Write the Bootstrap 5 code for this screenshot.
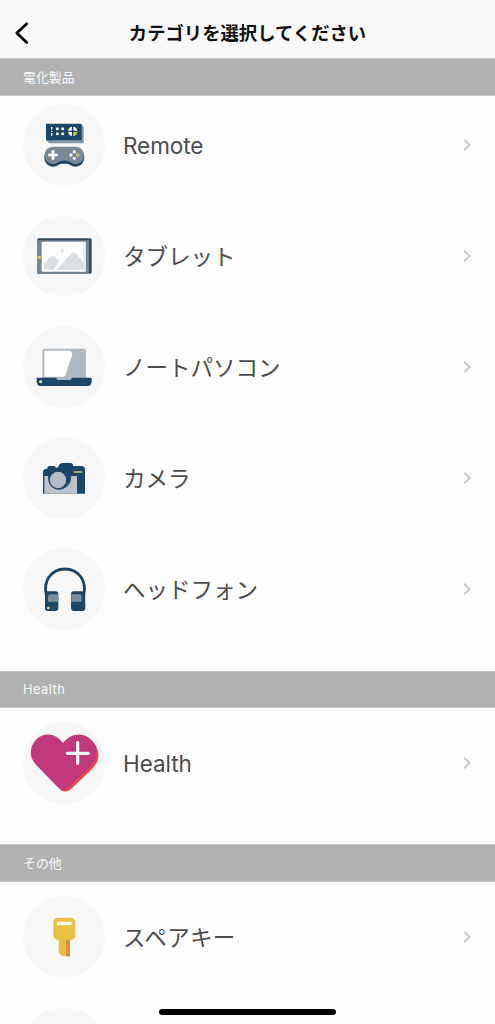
<!DOCTYPE html>
<html lang="ja">
<head>
<meta charset="utf-8">
<meta name="viewport" content="width=device-width, initial-scale=1">
<title>カテゴリを選択してください</title>
<link href="https://cdn.jsdelivr.net/npm/bootstrap@5.3.0/dist/css/bootstrap.min.css" rel="stylesheet">
<style>
  body { font-family: Inter, "Noto Sans CJK JP", sans-serif; background: #fefefe; }
  .screen { height: 1024px; }
  .topbar { height: 58px; background: #f9f9f9; padding-top: 8px; }
  .topbar h1 { font-size: 18.35px; font-weight: 700; color: #111; line-height: 50px; }
  .back-btn { left: 13px; top: 20px; width: 18px; height: 26px; }
  .section-bar { height: 37.5px; background: #b1b1b1; border-top: 1px solid #c6c6c6; border-bottom: 1px solid #c6c6c6; color: #fafafa; font-size: 12.9px; padding: 1px 0 0 23px; }
  .category { height: 111px; padding: 0 21px 0 23px; color: #4c4c4c; font-size: 22.5px; line-height: 1.2; }
  .category:hover { color: #4c4c4c; }
  .category .pic { width: 82px; height: 82px; margin-right: 18px; flex: none; }
  .first-group { margin-top: -6px; margin-bottom: 26px; }
  .mid-group { margin-top: -.5px; margin-bottom: 25.5px; }
  .last-group { height: 142.5px; }
  .latin { letter-spacing: -.05px; }
  .latin-sm { letter-spacing: .45px; }
  .kana-wide { letter-spacing: .35px; }
  .home-line { left: 159px; top: 1009px; width: 177px; height: 6px; background: #000; }
</style>
</head>
<body>
<div class="screen position-relative overflow-hidden">
<header class="topbar position-relative text-center">
  <a href="#" class="back-btn position-absolute d-block" aria-label="戻る">
    <svg class="d-block" width="18" height="26" viewBox="0 0 18 26" fill="none" stroke="#000" stroke-width="2.8" stroke-linecap="round" stroke-linejoin="round"><path d="M13.7 3.8 3.8 13.1l9.9 9.4"/></svg>
  </a>
  <h1 class="m-0">カテゴリを選択してください</h1>
</header>

<main>
  <div class="section-bar d-flex align-items-center">電化製品</div>
  <nav class="first-group">
    <a href="#" class="category d-flex align-items-center text-decoration-none">
      <svg class="pic" viewBox="27 28 246 246">
        <circle cx="150" cy="151" r="123" fill="#f7f7f7"/>
        <path d="M97 136h103V88l9 8v50H105z" fill="#8998a6"/>
        <path d="M96 87h107v50H96z" fill="#1d4666"/>
        <path d="M111 97h4v8h-4zm0 12h4v3h-4zm0 7h4v7h-4z" fill="#fff"/>
        <g fill="#fff"><circle cx="130" cy="102" r="4.5"/><circle cx="146" cy="102" r="4.5"/><circle cx="130" cy="117" r="4.5"/><circle cx="146" cy="117" r="4.5"/><circle cx="176" cy="110" r="14"/></g>
        <path d="M176 110h14a14 14 0 0 1-14 14z" fill="#d8c65b"/>
        <path d="M176 95v30M161 110h30" stroke="#1d4666" stroke-width="4"/>
        <circle cx="176" cy="110" r="4" fill="#1d4666"/>
        <path d="M118 161h66c17 0 27 12 27 27s-10 28-27 28c-13 0-17-9-25-9h-16c-8 0-13 9-25 9-17 0-27-13-27-28s10-27 27-27z" fill="#1d4666"/>
        <path d="M118 156h66c16 0 26 11 26 26s-10 26-25 26c-13 0-18-10-26-10h-16c-8 0-14 10-26 10-15 0-25-11-25-26s10-26 26-26z" fill="#798895"/>
        <path d="M117 167v28M103 181h28" stroke="#fff" stroke-width="8"/>
        <g fill="#fff"><circle cx="181" cy="171" r="5"/><circle cx="171" cy="181" r="5"/><circle cx="181" cy="191" r="5"/></g>
        <circle cx="191" cy="181" r="5" fill="#d5c573"/>
      </svg>
      <span class="latin flex-grow-1">Remote</span>
      <svg width="13" height="18" viewBox="0 0 13 18" fill="none" stroke="#c6c6c6" stroke-width="1.9"><path d="m3.2 3.8 5.4 5.2-5.4 5.2"/></svg>
    </a>
    <a href="#" class="category d-flex align-items-center text-decoration-none">
      <svg class="pic" viewBox="27 28 246 246">
        <circle cx="150" cy="151" r="123" fill="#f7f7f7"/>
        <rect x="70" y="98" width="163" height="106" rx="4" fill="#354b5c"/>
        <path d="M69 107q0-3 3-3h150q3 0 3 3v97H72q-3 0-3-3z" fill="#768591"/>
        <rect x="83" y="108" width="132" height="90" rx="3" fill="#fff"/>
        <path d="M207 108h5q3 0 3 3v84q0 3-3 3h-5z" fill="#e9eef0"/>
        <circle cx="145" cy="135" r="5" fill="#d9e0e4"/>
        <path d="M90 192v-18l22-22q5-5 10 0l13 13-15 27zM128 192l45-49q6-6 12 0l24 26v23z" fill="#d8e0e3"/>
        <circle cx="76" cy="155" r="5.5" fill="#d4b856"/><path d="M73 155h8M77 151v8" stroke="#f4e18d" stroke-width="1.5"/>
      </svg>
      <span class="flex-grow-1">タブレット</span>
      <svg width="13" height="18" viewBox="0 0 13 18" fill="none" stroke="#c6c6c6" stroke-width="1.9"><path d="m3.2 3.8 5.4 5.2-5.4 5.2"/></svg>
    </a>
    <a href="#" class="category d-flex align-items-center text-decoration-none">
      <svg class="pic" viewBox="27 28 246 246">
        <circle cx="150" cy="151" r="123" fill="#f7f7f7"/>
        <path d="M85 184v-82q0-6 6-6h119q6 0 6 6v82z" fill="#afb9c2"/>
        <path d="M91 102h76q9 4 7 15l-20 59q-2 4-7 4H91z" fill="#fff"/>
        <path d="M68 183h59q1 6 7 6h32q6 0 7-6h60v10q0 15-12 15H80q-12 0-12-15z" fill="#1d4666"/>
        <path d="M127 183h46q-1 7-8 7h-31q-6 0-7-7z" fill="#afb9c2"/>
        <circle cx="80" cy="195" r="4.8" fill="#d9d68a"/><circle cx="81" cy="195" r="2" fill="#fff8c8"/>
      </svg>
      <span class="flex-grow-1">ノートパソコン</span>
      <svg width="13" height="18" viewBox="0 0 13 18" fill="none" stroke="#c6c6c6" stroke-width="1.9"><path d="m3.2 3.8 5.4 5.2-5.4 5.2"/></svg>
    </a>
    <a href="#" class="category d-flex align-items-center text-decoration-none">
      <svg class="pic" viewBox="27 28 246 246">
        <circle cx="150" cy="151" r="123" fill="#f7f7f7"/>
        <path d="M87 198v-64q0-9 9-11h4q0-8 7-8h12q6 0 7 6h1q5-1 7-6 3-9 12-9h23q8 0 9 9h24q11 0 11 11v72z" fill="#1d4666"/>
        <path d="M91 145h98v53H91z" fill="#bac3cc"/>
        <path d="M171 143q2 17-6 27-8 11-20 15-19 5-32-7-11-12-11-31v-4z" fill="#1d4666"/>
        <circle cx="132" cy="157" r="24.5" fill="#b4bec8"/>
        <path d="M181 133h22" stroke="#d9ca5e" stroke-width="5" stroke-linecap="round"/>
      </svg>
      <span class="flex-grow-1">カメラ</span>
      <svg width="13" height="18" viewBox="0 0 13 18" fill="none" stroke="#c6c6c6" stroke-width="1.9"><path d="m3.2 3.8 5.4 5.2-5.4 5.2"/></svg>
    </a>
    <a href="#" class="category d-flex align-items-center text-decoration-none">
      <svg class="pic" viewBox="27 28 246 246">
        <circle cx="150" cy="151" r="123" fill="#f7f7f7"/>
        <path d="M97 168c-5-20-3-37 8-53 11-15 28-24 48-24s37 9 48 24c11 16 13 33 8 53" fill="none" stroke="#1d4666" stroke-width="8.5"/>
        <path d="M93 158h32q8 0 8 8v42q0 9-9 9h-23q-8 0-8-8zM179 158h34l1 50q0 9-8 9h-24q-11 0-11-10v-40q0-9 8-9z" fill="#1d4666"/>
        <path d="M102 174q0-7 7-7h24v22h-31zM172 167h25q6 0 6 7v15h-31z" fill="#7890a3"/>
        <circle cx="103" cy="208" r="4" fill="#e5df86"/>
      </svg>
      <span class="flex-grow-1">ヘッドフォン</span>
      <svg width="13" height="18" viewBox="0 0 13 18" fill="none" stroke="#c6c6c6" stroke-width="1.9"><path d="m3.2 3.8 5.4 5.2-5.4 5.2"/></svg>
    </a>
  </nav>

  <div class="section-bar latin-sm d-flex align-items-center">Health</div>
  <nav class="mid-group">
    <a href="#" class="category d-flex align-items-center text-decoration-none">
      <svg class="pic" viewBox="27 28 246 246">
        <circle cx="150" cy="151" r="123" fill="#f7f7f7"/>
        <path d="M149 90c20-25 57-29 80-8 26 19 31 51 16 73-4 7-8 11-14 17l-60 57q-18 15-35 0z" fill="#f04452"/>
        <path d="M147 92c-20-30-56-35-81-11-21 22-21 53 0 75l68 70q14 11 27 1l67-64c23-21 27-56 7-79-25-28-66-24-88 8z" fill="#c1387c"/>
        <path d="M191 90v62M160 122h63" stroke="#fff" stroke-width="9.5" stroke-linecap="round"/>
      </svg>
      <span class="latin flex-grow-1">Health</span>
      <svg width="13" height="18" viewBox="0 0 13 18" fill="none" stroke="#c6c6c6" stroke-width="1.9"><path d="m3.2 3.8 5.4 5.2-5.4 5.2"/></svg>
    </a>
  </nav>

  <div class="section-bar d-flex align-items-center">その他</div>
  <nav class="last-group overflow-hidden">
    <a href="#" class="category d-flex align-items-center text-decoration-none">
      <svg class="pic" viewBox="27 28 246 246">
        <circle cx="150" cy="151" r="123" fill="#f7f7f7"/>
        <path d="M133 93h36q15 0 15 15v38q0 14-16 14v49h-16q-18-1-18-18v-31q-16 0-16-14v-38q0-15 15-15z" fill="#e8c143"/>
        <path d="M156 160h12v49h-12z" fill="#dc9038"/>
        <rect x="129" y="105" width="44" height="11" rx="2" fill="#fffdf5"/>
      </svg>
      <span class="kana-wide flex-grow-1">スペアキー</span>
      <svg width="13" height="18" viewBox="0 0 13 18" fill="none" stroke="#c6c6c6" stroke-width="1.9"><path d="m3.2 3.8 5.4 5.2-5.4 5.2"/></svg>
    </a>
    <div class="category d-flex align-items-center">
      <svg class="pic" viewBox="27 28 246 246"><circle cx="150" cy="151" r="123" fill="#f7f7f7"/></svg>
    </div>
  </nav>
</main>
<div class="home-line position-absolute rounded-pill"></div>
</div>
<script src="https://cdn.jsdelivr.net/npm/bootstrap@5.3.0/dist/js/bootstrap.bundle.min.js"></script>
</body>
</html>
